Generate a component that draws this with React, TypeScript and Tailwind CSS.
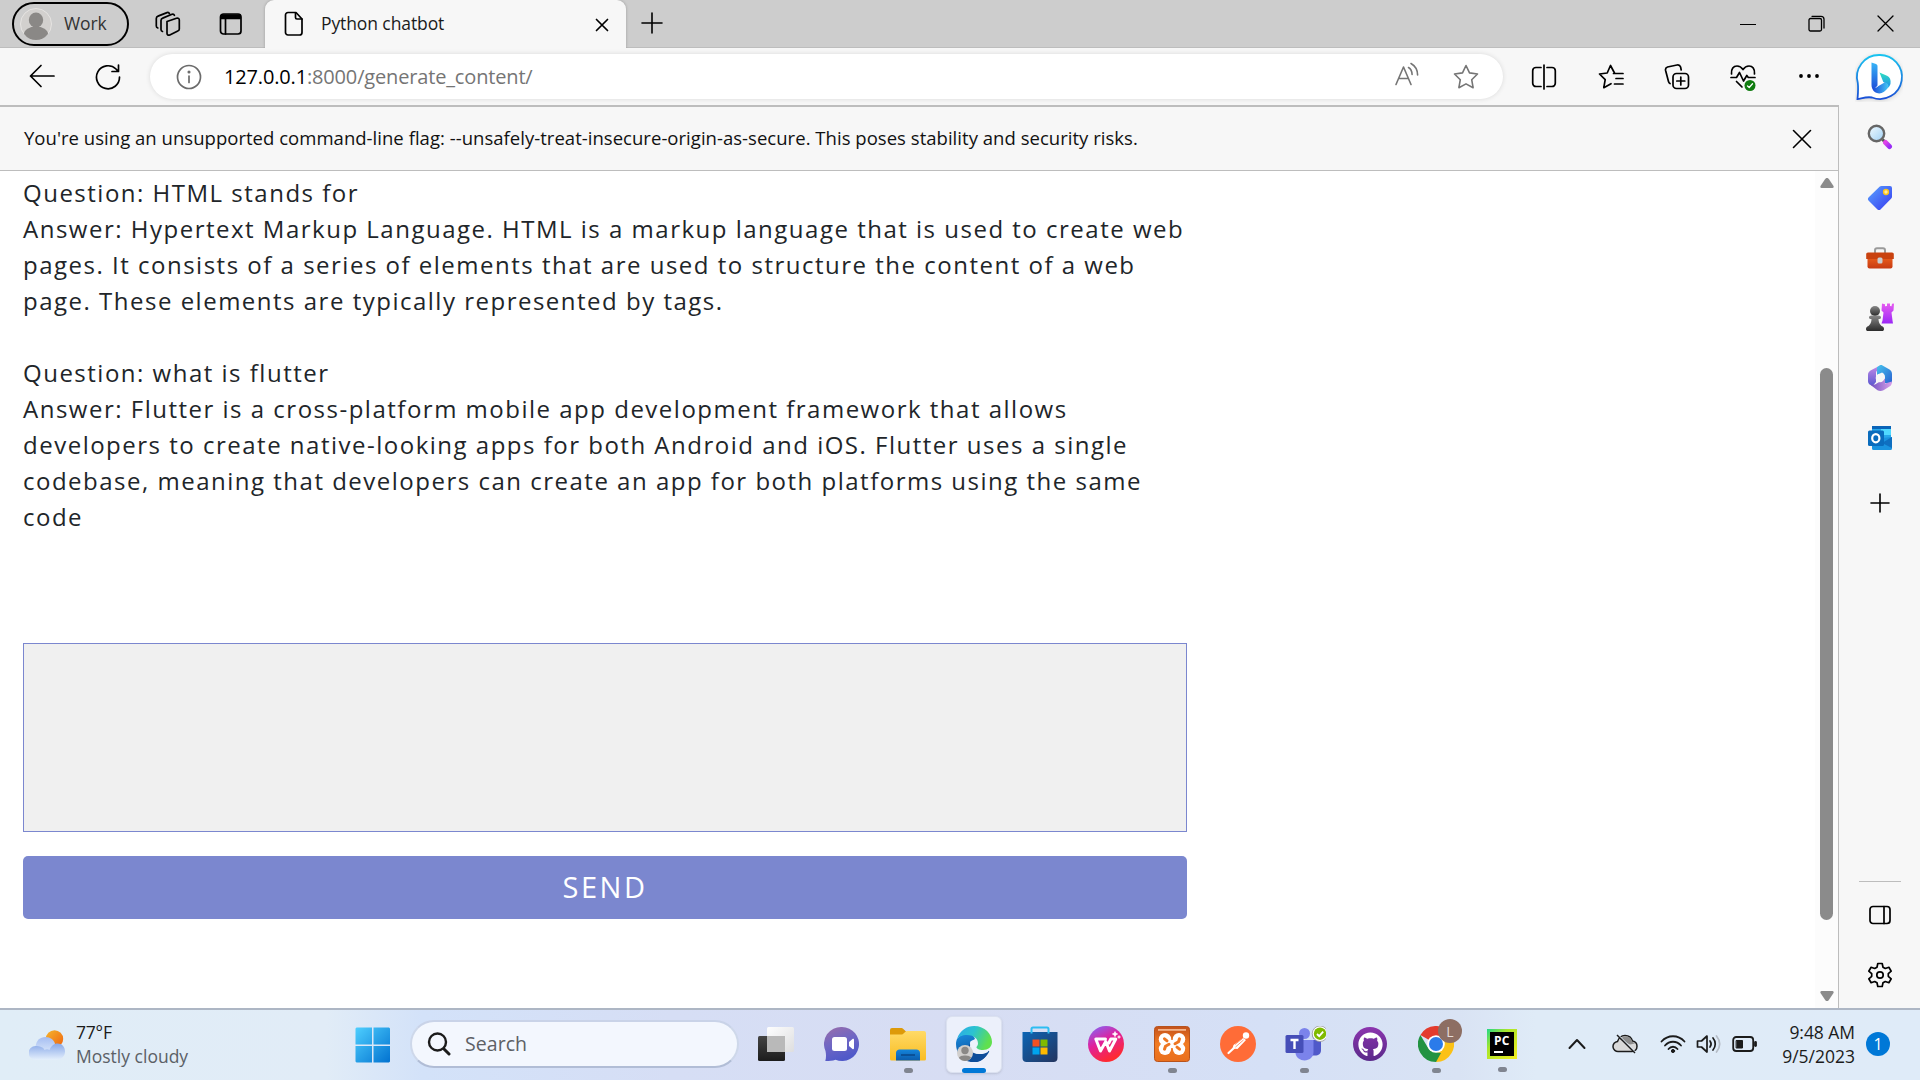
import React from "react";
import { FaGithub } from "react-icons/fa";

type IconProps = { w: number; h?: number; children: React.ReactNode; cls?: string; sw?: number };

/* Line icon whose drawing units equal CSS pixels. */
function Line({ w, h = w, children, cls = "", sw = 1.7 }: IconProps) {
  return (
    <svg width={w} height={h} viewBox={`0 0 ${w} ${h}`} className={`block shrink-0 ${cls}`} fill="none" stroke="currentColor" strokeWidth={sw} strokeLinecap="round" strokeLinejoin="round">
      {children}
    </svg>
  );
}

function Art({ w, h = w, children, cls = "" }: IconProps) {
  return (
    <svg width={w} height={h} viewBox={`0 0 ${w} ${h}`} className={`block shrink-0 ${cls}`}>
      {children}
    </svg>
  );
}

function Grad({ id, from, to, mid, x2 = 1, y2 = 1 }: { id: string; from: string; to: string; mid?: string; x2?: number; y2?: number }) {
  return (
    <linearGradient id={id} x1="0" y1="0" x2={x2} y2={y2}>
      <stop offset="0" stopColor={from} />
      {mid && <stop offset="0.5" stopColor={mid} />}
      <stop offset="1" stopColor={to} />
    </linearGradient>
  );
}

function TabStrip() {
  return (
    <div className="flex h-12 shrink-0 items-start border-b border-[#bdbdbd] bg-[#cdcdcd]">
      <div className="ml-3 mt-0.5 flex h-11 w-[117px] items-center rounded-full border-2 border-black bg-[#cdcdcd]">
        <Art w={32} cls="ml-[6px]">
          <circle cx="16" cy="16" r="15.5" fill="#d2d0ce" stroke="#e6e4e2" />
          <ellipse cx="16" cy="12" rx="7.2" ry="7.5" fill="#8a8886" />
          <path d="M4 26a12 7.5 0 0 1 24 0a15 15 0 0 1-24 0z" fill="#8a8886" />
        </Art>
        <span className="-mt-px ml-[12px] text-[17.5px] tracking-[-0.1px] text-[#333]">Work</span>
      </div>
      <Line w={26} h={26} cls="ml-[26px] mt-[11px]">
        <path d="M12 10.5l9.5-3.3c1.600-.5 2.800.3 2.800 1.800v9c0 1-.5 1.700-1.500 2l-8 4c-1.600.6-2.800-.2-2.800-1.700z" />
        <path d="M7.500 20.500c-1-.3-1.500-1-1.500-2V9.500c0-1.200.6-2 1.700-2.400L17 3.300c1.200-.4 2 0 2.400 1" />
        <path d="M2.800 17c-1-.3-1.500-1-1.500-2V7.500c0-1.200.6-2 1.700-2.400L12 1.600c1.200-.4 2 0 2.400 1" />
      </Line>
      <Line w={24} h={24} cls="ml-[38px] mt-3">
        <rect x="1.500" y="2" width="20.500" height="20" rx="3" />
        <path d="M2.500 3h18.500v3.500H2.500z" fill="currentColor" />
        <path d="M6.500 7v15" />
      </Line>
      <div className="ml-[22px] flex h-12 w-[361px] items-center rounded-t-[9px] bg-[#f7f7f7] shadow-[0_0_3px_rgba(0,0,0,0.25)]">
        <Line w={20} h={26} cls="ml-[19px]">
          <path d="M4 1.500h8L18 8v13.500a2.500 2.500 0 0 1-2.500 2.500H4a2.500 2.500 0 0 1-2.500-2.500V4A2.500 2.500 0 0 1 4 1.500z" />
          <path d="M11.500 2v4.500A1.500 1.500 0 0 0 13 8h5" />
        </Line>
        <span className="-mt-px ml-[17px] flex-1 whitespace-nowrap text-[17.5px] tracking-[-0.1px] text-[#1b1b1b]">Python chatbot</span>
        <Line w={14} cls="mr-[17px] mt-0.5">
          <path d="M1.500 1.500l11 11M12.500 1.500l-11 11" />
        </Line>
      </div>
      <Line w={22} cls="ml-[15px] mt-[12px]" sw={1.6}>
        <path d="M11 1v20M1 11h20" />
      </Line>
      <div className="ml-auto flex items-center gap-[52px] pr-[26px] pt-[15px]">
        <Line w={16} sw={1.2}><path d="M.5 8.500h15" /></Line>
        <Line w={17} sw={1.3}>
          <rect x="1" y="3.500" width="12.500" height="12.500" rx="1.500" />
          <path d="M4 1.300h9a3 3 0 0 1 3 3V13" />
        </Line>
        <Line w={17} sw={1.3}><path d="M1 1l15 15M16 1L1 16" /></Line>
      </div>
    </div>
  );
}

function Toolbar() {
  return (
    <div className="flex h-[57px] shrink-0 items-center bg-[#f7f7f7]">
      <Line w={26} cls="-mt-px ml-[29px]">
        <path d="M1.500 13H25M12 2.500L1.500 13 12 23.500" />
      </Line>
      <Line w={26} cls="ml-[40px]">
        <path d="M24.500 13A11.500 11.500 0 1 1 21 5l2 2.200M23.500 1v6.500H17" />
      </Line>
      <div className="ml-[29px] flex h-[45px] w-[1353px] items-center rounded-full bg-white shadow-[0_0_5px_rgba(0,0,0,0.12)]">
        <Line w={26} cls="ml-[26px] text-[#6b6b6b]">
          <circle cx="13" cy="13" r="11.500" />
          <path d="M13 12v6.500" />
          <circle cx="13" cy="8" r=".7" fill="currentColor" />
        </Line>
        <span className="ml-[22px] flex-1 whitespace-nowrap text-[20px] tracking-[-0.16px] text-[#757575]">
          <span className="text-black">127.0.0.1</span>:8000/generate_content/
        </span>
        <Line w={26} cls="-mt-1 mr-[33px] text-[#757575]" sw={1.6}>
          <path d="M2 22.500L9.500 5 17 22.500M4.800 16.500h9.600M14.500 5.500c2.500 1.500 3.500 4 3.600 7M17 1.500c4.500 2.500 6.500 6.500 6.600 11.500" />
        </Line>
        <Line w={26} cls="mr-[24px] text-[#757575]" sw={1.6}>
          <path d="M13 1.500l3.500 7.400 8 1.100-5.800 5.700 1.400 8L13 19.900l-7.100 3.800 1.400-8L1.500 10l8-1.100z" />
        </Line>
      </div>
      <Line w={26} cls="ml-[28px]">
        <path d="M10 3.500H5A3.300 3.300 0 0 0 1.700 6.800v12.400A3.300 3.300 0 0 0 5 22.500h5M16 3.500h5a3.300 3.300 0 0 1 3.300 3.300v12.400a3.300 3.300 0 0 1-3.300 3.300h-5M13 1v24" />
      </Line>
      <Line w={26} cls="ml-[41px]">
        <path d="M16.500 9L12.500 1.500 9.200 9 1.500 10l5.700 5.700-1.400 8 7.200-4M15.500 9.500H25M18 14.500h7M16.500 20H25" />
      </Line>
      <Line w={26} cls="ml-[40px]">
        <rect x="9" y="9.500" width="15.500" height="15" rx="3.500" />
        <path d="M16.800 13v8M12.800 17h8M6 19.500C5 19 4.700 18.300 4.500 17.500L1.600 6.500C1.200 4.700 2 3.500 3.500 3l9.500-2c2-.4 3 .3 3.600 2l.6 3" />
      </Line>
      <Line w={26} h={28} cls="ml-[40px] mt-0.5">
        <path d="M1.500 10C1 4.500 3.500 2 7 2c2.500 0 4.500 1.300 6 3.500C14.500 3.300 16.500 2 19 2c3.500 0 6 2.500 5.500 8M1 13.500h5.500l3-5 4 8.500 3.300-5.500 1.500 2H25M6.500 17.500L12 23" />
        <circle cx="20" cy="21.500" r="5.500" fill="#107c10" stroke="none" />
        <path d="M17.500 22l1.700 1.500 3.300-3.800" stroke="#fff" strokeWidth="1.300" />
      </Line>
      <Art w={22} h={6} cls="-mt-px ml-[42px]">
        <circle cx="3" cy="3" r="1.900" /><circle cx="11" cy="3" r="1.900" /><circle cx="19" cy="3" r="1.900" />
      </Art>
      <BingMark />
    </div>
  );
}

function BingMark() {
  return (
    <Art w={48} h={50} cls="ml-[35px]">
      <defs>
        <Grad id="bubble" from="#19c4f0" to="#1a4fd6" x2={0} />
        <Grad id="bstem" from="#37b5f7" to="#1d4bd8" x2={0} />
        <Grad id="bbowl" from="#2ee0c0" to="#2190ea" x2={0} />
        <Grad id="bfoot" from="#1b47d8" to="#44c8f4" y2={0} />
      </defs>
      <path d="M24 3a22 22 0 1 1-7 42.500c-5-1-9 .5-14.500 1.500C3 41 3.500 37 2.800 31A22 22 0 0 1 24 3z" fill="#fff" stroke="url(#bubble)" strokeWidth="1.800" className="drop-shadow-sm" />
      <path d="M16.500 10.500l4.500 1.500c1 .5 1.500 1 1.500 2.500v19l-4 4.500c-1.500-1.500-2-3-2-5z" fill="url(#bstem)" />
      <path d="M24.500 20.500l7.500 3.200c3 1.500 4 4 3.500 8-.6 1.700-1 2.600-2.200 3.800-.5-3-2.300-4-5-5.500z" fill="url(#bbowl)" />
      <path d="M17.500 36c2.500 1 4.500-1 6-2l6.500-3.800c3 1 4 3 3.300 5.300-3 4-7.300 7-11.300 5.500-2.800-1-4.500-2.500-4.500-5z" fill="url(#bfoot)" />
    </Art>
  );
}

function InfoBar() {
  return (
    <div className="flex h-16 shrink-0 items-center justify-between border-b border-[#bdbdbd] bg-[#f7f7f7] pl-6 pr-[26px]">
      <span className="-mt-px whitespace-nowrap text-[18.5px] tracking-[0.03px] text-[#111]">
        You're using an unsupported command-line flag: --unsafely-treat-insecure-origin-as-secure. This poses stability and security risks.
      </span>
      <Line w={20} sw={1.6}><path d="M1.500 1.500l17 17M18.500 1.500l-17 17" /></Line>
    </div>
  );
}

const transcript = [
  "Question: HTML stands for",
  "Answer: Hypertext Markup Language. HTML is a markup language that is used to create web",
  "pages. It consists of a series of elements that are used to structure the content of a web",
  "page. These elements are typically represented by tags.",
  "",
  "Question: what is flutter",
  "Answer: Flutter is a cross-platform mobile app development framework that allows",
  "developers to create native-looking apps for both Android and iOS. Flutter uses a single",
  "codebase, meaning that developers can create an app for both platforms using the same",
  "code",
];

function Page() {
  return (
    <div className="flex min-h-0 flex-1 bg-white">
      <main className="flex flex-1 flex-col pl-[23px] pt-[4px]">
        <div className="text-[24px] leading-9 tracking-[1.5px] text-[#212529]">
          {transcript.map((line, i) => (
            <p key={i} className="h-9 whitespace-nowrap">{line}</p>
          ))}
        </div>
        <div className="mt-[108px] h-[189px] w-[1164px] border border-[#7b87cf] bg-[#f0f0f0]" />
        <button className="mt-6 h-[63px] w-[1164px] rounded-[5px] bg-[#7b87cf] pb-px text-[29px] tracking-[2.5px] text-white">SEND</button>
      </main>
      <div className="flex w-[23px] flex-col items-center bg-[#fcfcfc] pb-[7px] pt-[7px]">
        <Art w={14} h={10}><path d="M7 0c1 0 1.500.6 2 1.300L13.500 8c.5 1 0 2-1 2h-11c-1 0-1.500-1-1-2L5 1.300C5.500.6 6 0 7 0z" fill="#8b8b8b" /></Art>
        <div className="mt-[180px] h-[552px] w-[13px] rounded-full bg-[#8b8b8b]" />
        <Art w={14} h={10} cls="mt-auto"><path d="M7 10c-1 0-1.500-.6-2-1.300L.5 2C0 1 .5 0 1.500 0h11c1 0 1.500 1 1 2L9 8.700C8.500 9.400 8 10 7 10z" fill="#8b8b8b" /></Art>
      </div>
    </div>
  );
}

function Sidebar() {
  return (
    <aside className="flex w-[81px] shrink-0 flex-col items-center bg-[#f7f7f7] pt-[19px]">
      <Art w={26}>
        <defs><Grad id="lens" from="#f2fbff" to="#9fd0f5" /><Grad id="mh" from="#e043e8" to="#9a2df5" /></defs>
        <path d="M15.500 15.500l3.500 3.500" stroke="#555" strokeWidth="3" />
        <path d="M18.500 18.500l4 4" stroke="url(#mh)" strokeWidth="5" strokeLinecap="round" />
        <circle cx="9.500" cy="9.500" r="7.700" fill="url(#lens)" stroke="#666" strokeWidth="2.400" />
      </Art>
      <Art w={26} cls="mt-[35px]">
        <defs><Grad id="tag" from="#5aa4ff" to="#3638ef" /></defs>
        <path d="M14.500 1h8.500a2 2 0 0 1 2 2v8.500c0 1-.3 1.600-1 2.300L13.500 24.500c-1 .8-2 .8-3 0L1.500 15.500c-.8-1-.8-2 0-3L12.500 1.700c.6-.5 1.200-.7 2-.7z" fill="url(#tag)" />
        <circle cx="19" cy="7" r="2.400" fill="#ffeaa0" stroke="#fbc51c" strokeWidth="1.500" />
      </Art>
      <Art w={28} h={22} cls="mt-[36px]">
        <defs><Grad id="tb" from="#f2651d" to="#c63a12" x2={0} /></defs>
        <path d="M9 6V3.500C9 2 9.800 1.200 11 1.200h6c1.200 0 2 .8 2 2.300V6" fill="none" stroke="#9a9a9a" strokeWidth="2" />
        <rect x="1.500" y="8" width="25" height="13.500" rx="2" fill="url(#tb)" />
        <path d="M2 5.500h24a1.800 1.800 0 0 1 1.800 2V12H.2V7.500a1.800 1.800 0 0 1 1.800-2z" fill="#c9420f" />
        <rect x="11.500" y="10.500" width="5" height="6" rx="1.500" fill="#c8ccd0" />
      </Art>
      <Art w={28} h={28} cls="mt-[34px]">
        <defs><Grad id="pawn" from="#888" to="#2c2c2c" x2={0} /><Grad id="rook" from="#e65cf0" to="#9b28f6" x2={0} /></defs>
        <path d="M16 .500l3 .8v2l2-.3V.500h3v2.500l1.500.3.500-2.500 2-.3-.5 7-2 2 1 8 .5 3H15.500l1-3 1-8-2-2z" fill="url(#rook)" />
        <circle cx="9" cy="8" r="5" fill="url(#pawn)" />
        <path d="M3 14.500c0-1.300 1-2 2.500-2h7c1.500 0 2.500.7 2.500 2s-1 1.500-2.500 1.500c0 3 1 5 3 7 2 .5 2.500 1.500 2.500 3s-.7 2-2 2H2c-1.300 0-2-.5-2-2s.7-2.500 2.500-3c2-2 3-4 3-7C4 16 3 15.800 3 14.500z" fill="url(#pawn)" />
      </Art>
      <Art w={26} h={28} cls="mt-[33px]">
        <defs><Grad id="m1" from="#46c4ee" to="#2a62d0" /><Grad id="m2" from="#c58be8" to="#5b59d0" x2={0} /><Grad id="m3" from="#6d4fc0" to="#d9a0ea" y2={0} /></defs>
        <path d="M13 1.500L3.500 6.500C1.700 7.600 1 9 1 11v6c0 3 2.500 4.500 5 4.500L9 18v-9c0-2 1.500-3 3-4z" fill="url(#m2)" />
        <path d="M10 3.200L13 1.200c1-.4 1.700-.2 2.500.2l7 4C24.300 6.500 25 8 25 10v9l-7 0V13c0-2-1-3.500-3-4.500l-5 2.500z" fill="url(#m1)" />
        <path d="M3 20.500h5l10-6v5l7-2c0 2.500-.8 4-2.500 5l-6 3.700c-2 1-4 1-6 0z" fill="url(#m3)" />
        <circle cx="13" cy="14" r="4.300" fill="#f7f7f7" />
      </Art>
      <Art w={26} cls="mt-[33px]">
        <rect x="5" y="1" width="19" height="14" rx="1.500" fill="#28a8ea" />
        <path d="M14 1h10v9H14z" fill="#50d9ff" /><path d="M5 1h19v3H5z" fill="#0a64b8" />
        <path d="M5 14l20-2v11.500a1.500 1.500 0 0 1-1.500 1.500h-17A1.500 1.500 0 0 1 5 23.500z" fill="#1a93df" /><path d="M15 18l10-6v11z" fill="#0f6fc0" />
        <rect x="1" y="5.500" width="16" height="15.500" rx="1.500" fill="#0a6cbd" />
        <ellipse cx="8.800" cy="13.200" rx="3.600" ry="4.100" fill="none" stroke="#fff" strokeWidth="2.200" />
      </Art>
      <Line w={20} cls="mt-[42px]" sw={1.6}><path d="M10 1v18M1 10h18" /></Line>
      <div className="mt-auto w-[42px] border-t border-[#bdbdbd]" />
      <Line w={22} h={20} cls="mt-[23px]">
        <rect x="1" y="1.500" width="20" height="17" rx="3" /><path d="M15 1.500v17" />
      </Line>
      <Line w={26} cls="mb-[20px] mt-[37px]">
        <path d="M10.800 1.500h4.400l.8 3.700 2.300 1.300 3.600-1.200 2.300 3.900-2.900 2.500v2.600l2.900 2.500-2.300 3.900-3.600-1.200-2.300 1.300-.8 3.700h-4.400l-.8-3.700-2.300-1.300-3.600 1.200-2.300-3.900 2.900-2.500v-2.600L1.800 9.200l2.300-3.900 3.600 1.200L10 5.200z" />
        <circle cx="13" cy="13" r="3.200" />
      </Line>
    </aside>
  );
}

function AppSlot({ children, running, active }: { children: React.ReactNode; running?: boolean; active?: boolean }) {
  return (
    <div className="flex h-full w-[66px] flex-col items-center">
      <div className={active ? "mt-[6px] flex h-[57px] w-14 flex-col items-center rounded-md border border-[#dbe1f0] bg-[#ecf0fb] shadow-sm" : "mt-[6px] flex h-[57px] w-14 flex-col items-center border border-transparent"}>
        <div className="mt-[9px] flex h-9 items-center justify-center">{children}</div>
        {active && <div className="mt-[6px] h-[5px] w-6 shrink-0 rounded-full bg-[#0078d7]" />}
        {running && <div className="mt-[6px] h-[5px] w-[9px] shrink-0 rounded-full bg-[#808590]" />}
      </div>
    </div>
  );
}

function Apps() {
  return (
    <div className="ml-[4px] flex h-full">
      <AppSlot>
        <Art w={36}>
          <defs><Grad id="tv" from="#444" to="#1c1c1c" x2={0} /><Grad id="tw" from="#fff" to="#dedede" /></defs>
          <rect x="0" y="10" width="27" height="25" rx="1.500" fill="url(#tv)" />
          <rect x="9" y="1" width="27" height="25" rx="1.500" fill="url(#tw)" opacity=".96" /><rect x="9" y="10" width="18" height="16" fill="#b9b9b9" />
        </Art>
      </AppSlot>
      <AppSlot>
        <Art w={36}>
          <defs><Grad id="chat" from="#9b6da9" to="#5059c9" mid="#7167c3" x2={0.4} /></defs>
          <path d="M18 1a17 17 0 1 1-6.500 32.700c-3 1-6 1.300-10.200 1.300.8-3 1-6 .2-10A17 17 0 0 1 18 1z" fill="url(#chat)" />
          <rect x="8" y="11" width="15" height="14" rx="2.500" fill="#fff" /><path d="M25 16l3.500-3c1-.5 1.500 0 1.500 1v8c0 1-.5 1.500-1.500 1L25 20z" fill="#fff" />
        </Art>
      </AppSlot>
      <AppSlot running>
        <Art w={36}>
          <defs><Grad id="fold" from="#ffda67" to="#f9bd22" x2={0} /><Grad id="fb" from="#1485dc" to="#0c5cac" x2={0} /></defs>
          <path d="M0 4a2 2 0 0 1 2-2h9c1 0 1.600.3 2.300 1L16 5.500V14H0z" fill="#dd9a0a" />
          <path d="M0 8.500h11c1.500 0 2-.5 3-1.500l1.500-1.300c.5-.5 1-.7 2-.7H34a2 2 0 0 1 2 2v26a1.500 1.500 0 0 1-1.500 1.500h-33A1.500 1.500 0 0 1 0 33z" fill="url(#fold)" />
          <path d="M6 34.500V27c0-2 1.500-3.500 3.500-3.500h17c2 0 3.500 1.500 3.500 3.500v7.500z" fill="url(#fb)" /><path d="M11 29h14" stroke="#0a498c" strokeWidth="1.600" />
        </Art>
      </AppSlot>
      <AppSlot active>
        <Art w={36}>
          <defs><Grad id="e1" from="#2ba9ea" to="#60e04e" mid="#2cc3d0" y2={0.35} /><Grad id="e2" from="#1a8ee0" to="#0c4a96" x2={0.3} /></defs>
          <path d="M0 18c0-2 .5-4 1-5C5 7 17 5 19 13c-5 2-6 8-4 13 3 5 9 7 15 4-4 6-11 7-15 6C6 35 0 27 0 18z" fill="url(#e2)" />
          <path d="M15 17c-4 8 4 15 17 8 1-.5 1.500 0 1 1-5 9-13 11-18 10-6-6-5-15 0-19z" fill="#0d4d9a" />
          <path d="M14 17c0-3 6-4 7 0 .3 2-1.500 3-1.500 4.500C20 24 25 26 33 23.500c0 3-5 5-10 4.500-6-.5-9-5-9-11z" fill="#eef3fb" />
          <path d="M1 13C4 4 11 0 18 0c11 0 18 8 18 16 0 5-4 8-9 8-4 0-7-1.500-6.500-3 .3-.8 1.500-1.500 1.500-3.500C22 12 17 9 11 9 6 9 2.500 11 1 13z" fill="url(#e1)" />
          <circle cx="9" cy="27" r="8" fill="#d1cfcd" /><circle cx="9" cy="24.500" r="3.700" fill="#8a8886" /><path d="M3 32c0-3.500 12-3.500 12 0-3 4-9 4-12 0z" fill="#8a8886" />
        </Art>
      </AppSlot>
      <AppSlot>
        <Art w={36}>
          <defs><Grad id="store" from="#0c65b5" to="#24355f" /></defs>
          <path d="M9.500 8V3c0-1 .5-1.500 1.500-1.500h14c1 0 1.500.5 1.500 1.500v5" fill="none" stroke="#2dbdf2" strokeWidth="2" />
          <path d="M.5 6h35v26c0 2.500-1.500 4-4 4h-27c-2.500 0-4-1.500-4-4z" fill="url(#store)" />
          <path d="M9.500 6v1.500M26.500 6v1.500" stroke="#2dbdf2" strokeWidth="2" />
          <path d="M10.500 13.500h7v7h-7z" fill="#f25022" /><path d="M18.500 13.500h7v7h-7z" fill="#7fba00" /><path d="M10.500 21.500h7v7h-7z" fill="#00a4ef" /><path d="M18.500 21.500h7v7h-7z" fill="#ffb900" />
        </Art>
      </AppSlot>
      <AppSlot>
        <Art w={36}>
          <defs><Grad id="wps" from="#7c6cff" to="#ff2a30" mid="#e0219c" x2={0.5} /></defs>
          <circle cx="18" cy="18" r="18" fill="url(#wps)" />
          <path d="M17.500 13H7.800l4.700 12 5.300-9.500L21.500 25l6.300-12h-5l-2 4" fill="none" stroke="#fff" strokeWidth="3" strokeLinejoin="round" strokeLinecap="round" />
          <path d="M27 5.500l.9 1.700 1.800.8-1.800.9L27 10.700l-.9-1.800-1.800-.9 1.800-.8zM31 9.500l.5 1 1 .5-1 .5-.5 1-.5-1-1-.5 1-.5z" fill="#fff" stroke="#fff" strokeWidth=".6" />
        </Art>
      </AppSlot>
      <AppSlot running>
        <Art w={36}>
          <defs><Grad id="xa" from="#c3521c" to="#e96f1d" mid="#f27b22" x2={0} /></defs>
          <rect x=".5" y=".5" width="35" height="35" rx="3" fill="url(#xa)" stroke="#b8531c" />
          <path d="M4 3h28v1.800H4z" fill="#f3b48a" />
          <g fill="#fff">
            <circle cx="11" cy="13.200" r="6.200" /><circle cx="25" cy="13.200" r="6.200" /><circle cx="11" cy="22.800" r="6.200" /><circle cx="25" cy="22.800" r="6.200" />
            <path d="M8.500 14h19v8h-19z" />
          </g>
          <g fill="none" stroke="#ee7722" strokeWidth="3" strokeLinecap="round" strokeLinejoin="round">
            <path d="M10.500 12.800l2.500 2M25.500 12.800l-1 3-3.500 2M10.500 23.200l1-3 3.500-2M25.500 23.200l-2.500-2" />
          </g>
        </Art>
      </AppSlot>
      <AppSlot>
        <Art w={36}>
          <circle cx="18" cy="18" r="18" fill="#ff6c37" />
          <circle cx="26" cy="9.500" r="3.200" fill="#fff" />
          <path d="M23 12c1 .5 2 1.500 3 2l-8.500 9-5-.5 1-3.500z" fill="#fff" /><path d="M14.500 21.500L8.500 27" stroke="#fff" strokeWidth="2.200" strokeLinecap="round" /><path d="M15 18.500l7.500-6M15.500 21l8-7" stroke="#ff6c37" strokeWidth=".7" />
        </Art>
      </AppSlot>
      <AppSlot running>
        <Art w={44} h={36}>
          <g transform="translate(3.500 0)">
            <circle cx="19" cy="7.500" r="5.500" fill="#7b83eb" />
            <circle cx="31" cy="9" r="4.500" fill="#5059c9" />
            <path d="M24 14h11.500v10c0 4-2.500 5.500-6 5.500H24z" fill="#5059c9" />
            <path d="M10 14h18v12c0 11-17 11-18 1z" fill="#7b83eb" />
            <rect x="0" y="9" width="18" height="18" rx="1.500" fill="#464eb8" />
            <path d="M5 14h8M9 14v9" stroke="#fff" strokeWidth="2.400" />
            <circle cx="34.500" cy="7.700" r="7.800" fill="#fff" stroke="#999" strokeWidth=".8" /><circle cx="34.500" cy="7.700" r="6.200" fill="#7fba00" />
            <path d="M31.500 8l2.200 2.200 4-4.500" fill="none" stroke="#fff" strokeWidth="1.800" />
          </g>
        </Art>
      </AppSlot>
      <AppSlot>
        <div className="flex size-[34px] items-center justify-center rounded-full bg-linear-to-b from-[#8c34ae] to-[#5a2a8a]">
          <FaGithub size={25} color="#fff" />
        </div>
      </AppSlot>
      <AppSlot running>
        <div className="relative">
          <Art w={36}>
            <path d="M18 18L2.400 9A18 18 0 0 1 33.600 9z" fill="#e33b2e" />
            <path d="M18 18l15.600-9A18 18 0 0 1 18 36z" fill="#fbc116" />
            <path d="M2.400 9L11 23.500l7 2.500 5 1-5 9A18 18 0 0 1 2.400 9z" fill="#229342" />
            <circle cx="18" cy="18" r="8.800" fill="#fff" /><circle cx="18" cy="18" r="7" fill="#2b7bea" />
          </Art>
          <div className="absolute -top-[7px] left-[20px] flex size-6 items-center justify-center rounded-full bg-[#8d6e63] text-[14px] text-[#e6dcd8]">L</div>
        </div>
      </AppSlot>
      <AppSlot running>
        <div className="flex size-[30px] items-center justify-center bg-[linear-gradient(135deg,#21d789,#a8e62a_35%,#f4ee20)]">
          <div className="flex size-6 flex-col items-start bg-black pl-[4px] pt-px">
            <span className="text-[12px] font-bold leading-[15px] tracking-[0.2px] text-white">PC</span>
            <div className="mt-[3px] h-[2px] w-[9px] bg-white" />
          </div>
        </div>
      </AppSlot>
    </div>
  );
}

function Taskbar() {
  return (
    <footer className="flex h-18 shrink-0 items-center border-t-2 border-[#adb6c4] bg-[linear-gradient(90deg,#e0edf7_0%,#e1ecf7_17%,#d3e2f9_22%,#d6def5_35%,#d7ddf3_50%,#d5e0f6_66%,#d9e3f4_76%,#dfebf7_80%,#dfebf8_100%)] pb-0.5 text-[#1b1b1b]">
      <Art w={36} h={30} cls="ml-[29px] mt-0.5">
        <defs><Grad id="sun" from="#f5b52c" to="#f0620f" /><Grad id="cl" from="#a5bdf2" to="#dce9fa" x2={0} /><Grad id="cl2" from="#88a8e8" to="#e4effc" x2={0} /></defs>
        <circle cx="25.500" cy="9" r="8.700" fill="url(#sun)" />
        <path d="M6.500 17C7 10.500 11 7 16.500 7c5 0 8.500 3 9.500 7v10H6.500z" fill="url(#cl)" />
        <path d="M6.500 29.800A6.800 6.800 0 0 1 6.500 16c4 0 8 1 9 4 1.500-1 3.500-1 5 0 1.500-4 4.500-6.500 8-6.500 4.500 0 7.500 3.500 7.500 8s-3.500 8.300-8 8.300z" fill="url(#cl2)" />
      </Art>
      <div className="-mt-px ml-[11px] flex w-[279px] flex-col whitespace-nowrap text-[17.500px] leading-6">
        <span className="tracking-[-0.2px]">77°F</span>
        <span className="text-[#5b6066]">Mostly cloudy</span>
      </div>
      <Art w={36} cls="mt-px">
        <defs><linearGradient id="win" gradientUnits="userSpaceOnUse" x1="0" y1="0" x2="36" y2="36"><stop offset="0" stopColor="#4fd0ff" /><stop offset="1" stopColor="#0070cf" /></linearGradient></defs>
        <path d="M1.500.500H17v17H.500v-16zM18.500.500H34l1 1v16H18.500zM.500 19H17v16.500H1.500l-1-1zM18.500 19H35v15.500l-1 1H18.500z" fill="url(#win)" />
      </Art>
      <div className="ml-[19px] flex h-[48px] w-[329px] items-center rounded-full border-2 border-b-[#b1bdd6] border-l-[#ced8ea] border-r-[#ced8ea] border-t-[#c9d3e8] bg-[#f3f7fe]">
        <Line w={24} cls="ml-[15px]" sw={2.4}><circle cx="10.500" cy="10" r="8.500" /><path d="M17 17l5 5" strokeWidth="3" /></Line>
        <span className="ml-[14px] text-[19.500px] tracking-[0.05px] text-[#5d6065]">Search</span>
      </div>
      <Apps />
      <div className="ml-[33px] flex items-center">
        <Line w={18} h={12} sw={2}><path d="M1.500 10L9 2l7.500 8" /></Line>
        <Art w={26} h={22} cls="ml-[26px]">
          <path d="M6.500 18.500a5 5 0 0 1-1-10C7 4 10 2.500 13 2.500c4 0 6.500 2 7.500 5.500 3 .5 4.500 2.500 4.500 5.300 0 3-2 5.200-5 5.200z" fill="#d9d9d9" stroke="#1b1b1b" strokeWidth="1.500" />
          <path d="M8 6.500c4-5 11-3 12 2l3 2-5 1z" fill="#8c8c8c" />
          <path d="M6.500 2.500l17 17" stroke="#dfebf7" strokeWidth="1.500" /><path d="M5 2l18 18" stroke="#1b1b1b" strokeWidth="1.500" />
        </Art>
        <Line w={26} h={20} cls="ml-[22px]" sw={1.8}>
          <path d="M1.500 7.500c6.500-7 16.500-7 23 0M5 11.500c4.500-5 11.500-5 16 0M8.500 15c2.500-3 6.500-3 9 0" /><circle cx="13" cy="17" r="1.600" fill="currentColor" strokeWidth="1" />
        </Line>
        <Line w={26} h={20} cls="ml-[10px]">
          <path d="M1.500 7v6h4l5.500 5V2L5.500 7zM14 7c1.500 2 1.500 4 0 6M17 4c3 3.500 3 8.500 0 12" /><path d="M20.500 2c4 5 4 11 0 16" stroke="#b5bcc6" />
        </Line>
        <Line w={26} h={18} cls="ml-[10px]" sw={1.8}>
          <rect x="1.200" y="2" width="20" height="14" rx="3" /><path d="M4.500 5.500h6v7.500h-6z" fill="currentColor" strokeWidth="1" /><path d="M23.500 7.500v3" strokeWidth="2.800" />
        </Line>
      </div>
      <div className="-mt-px ml-auto flex flex-col items-end whitespace-nowrap text-[17.500px] leading-6">
        <span className="tracking-[-0.05px]">9:48 AM</span>
        <span>9/5/2023</span>
      </div>
      <div className="ml-[11px] mr-[30px] flex size-6 items-center justify-center rounded-full bg-[#0078d7] text-[16px] text-white">1</div>
    </footer>
  );
}

export default function App() {
  return (
    <div className="flex h-[1080px] w-[1920px] flex-col overflow-hidden bg-[#f7f7f7] font-['Open_Sans',sans-serif] text-black">
      <TabStrip />
      <Toolbar />
      <div className="flex min-h-0 flex-1">
        <div className="flex flex-1 flex-col border-r border-t-2 border-[#bdbdbd]">
          <InfoBar />
          <Page />
        </div>
        <Sidebar />
      </div>
      <Taskbar />
    </div>
  );
}
